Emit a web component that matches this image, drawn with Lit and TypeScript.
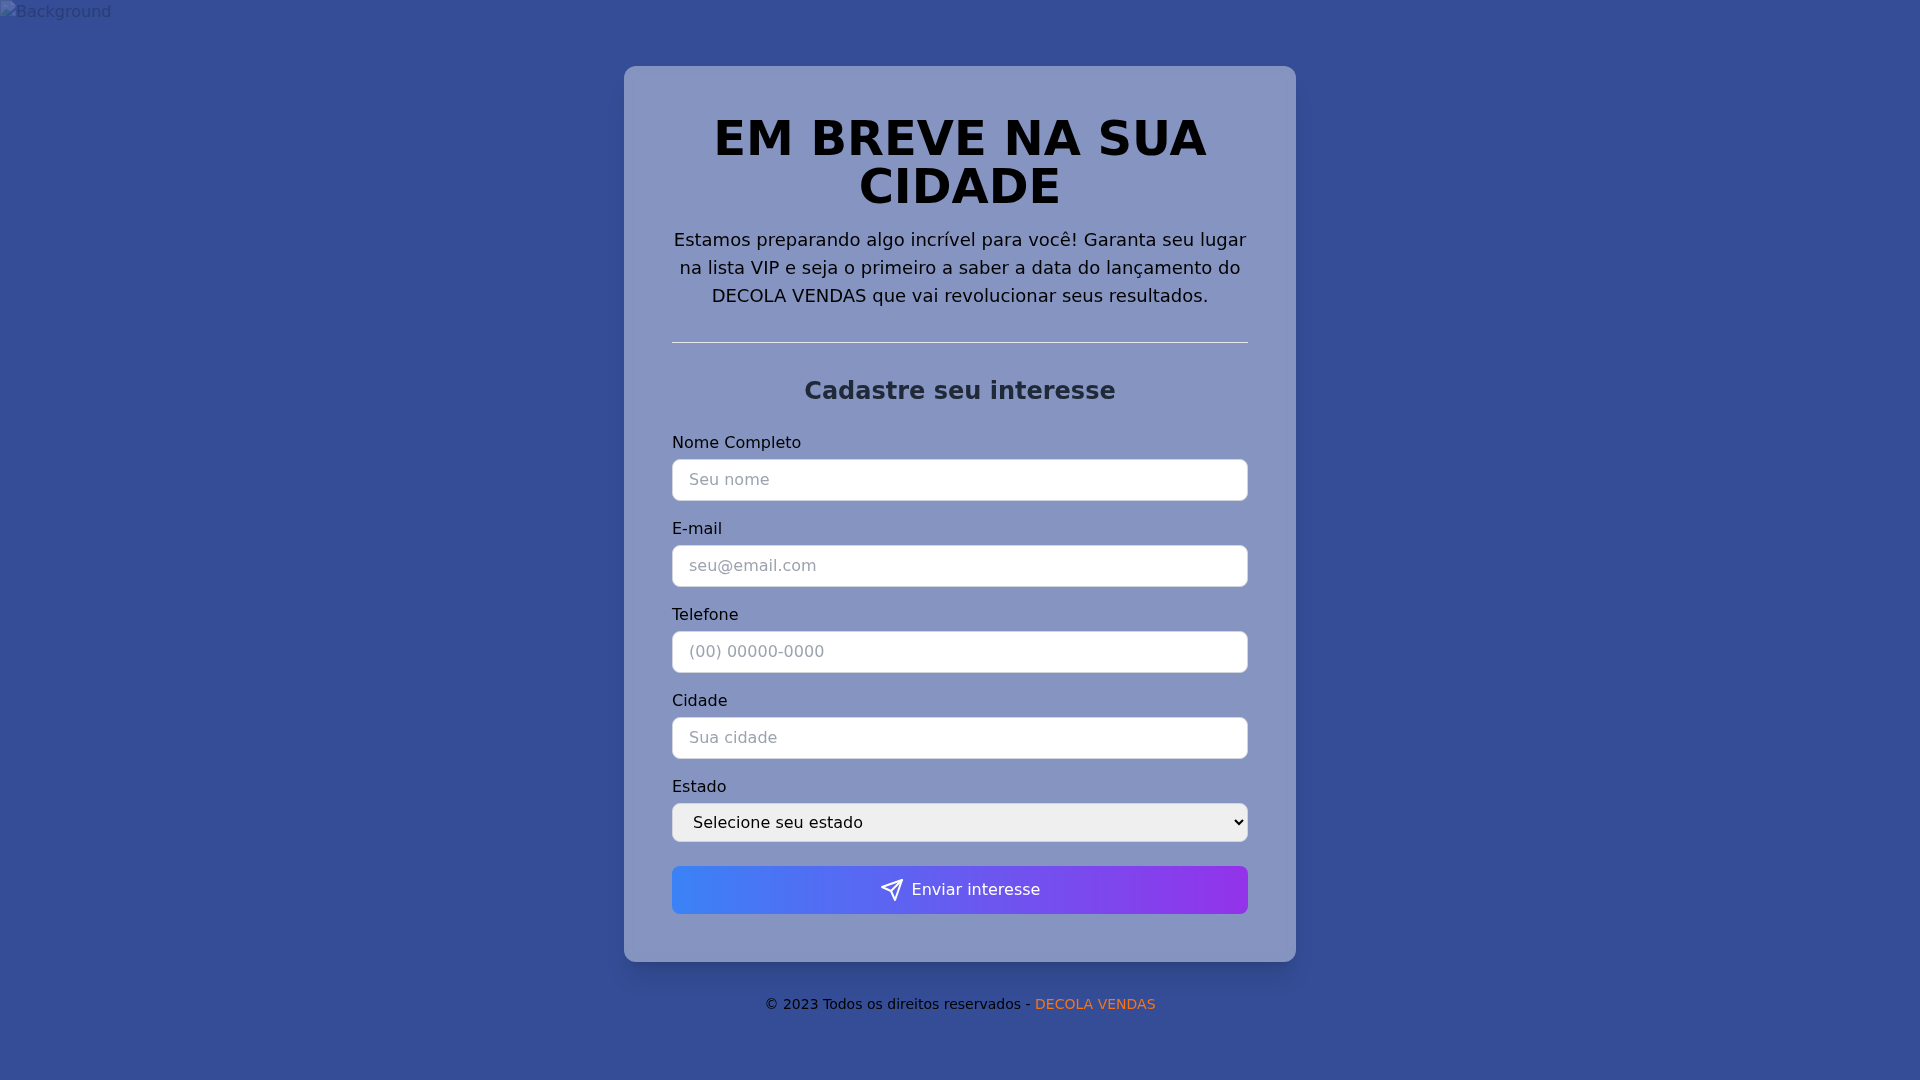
import { LitElement, html, css } from "lit";
import { customElement } from "lit/decorators.js";

interface Field {
  id: string;
  label: string;
  type: string;
  placeholder: string;
}

const FIELDS: Field[] = [
  { id: "nome", label: "Nome Completo", type: "text", placeholder: "Seu nome" },
  { id: "email", label: "E-mail", type: "email", placeholder: "seu@email.com" },
  { id: "telefone", label: "Telefone", type: "tel", placeholder: "(00) 00000-0000" },
  { id: "cidade", label: "Cidade", type: "text", placeholder: "Sua cidade" },
];

@customElement("app-root")
export class AppRoot extends LitElement {
  static styles = css`
    :host {
      display: block;
      font-family: "DejaVu Sans", sans-serif;
      font-size: 16px;
      line-height: 24px;
      color: #000;
    }
    *,
    *::before,
    *::after {
      box-sizing: border-box;
    }
    h1,
    h2,
    p {
      margin: 0;
    }
    .page {
      position: relative;
      min-height: 100vh;
      display: flex;
      flex-direction: column;
      align-items: center;
      justify-content: center;
      gap: 32px;
      background: #344d96;
    }
    .backdrop {
      position: absolute;
      top: 0;
      left: 0;
      display: flex;
      opacity: 0.2;
    }
    .card {
      position: relative;
      width: 100%;
      max-width: 672px;
      padding: 48px;
      border-radius: 12px;
      background: rgba(255, 255, 255, 0.4);
      backdrop-filter: blur(4px);
      box-shadow: 0 20px 25px -5px rgba(0, 0, 0, 0.1), 0 8px 10px -6px rgba(0, 0, 0, 0.1);
    }
    .intro {
      display: flex;
      flex-direction: column;
      gap: 16px;
      padding-bottom: 32px;
      margin-bottom: 32px;
      border-bottom: 1px solid #e5e7eb;
      text-align: center;
    }
    .title {
      font-size: 48px;
      line-height: 48px;
      font-weight: 700;
    }
    .lead {
      font-size: 18px;
      line-height: 28px;
    }
    .subtitle {
      margin-bottom: 24px;
      font-size: 24px;
      line-height: 32px;
      font-weight: 700;
      text-align: center;
      color: #1f2937;
    }
    .form {
      display: flex;
      flex-direction: column;
      gap: 16px;
    }
    .field {
      display: flex;
      flex-direction: column;
      gap: 4px;
    }
    .control {
      width: 100%;
      margin: 0;
      padding: 8px 16px;
      border: 1px solid #d1d5db;
      border-radius: 8px;
      font: inherit;
      color: #000;
    }
    .input {
      background: #fff;
    }
    .input::placeholder {
      color: #9ca3af;
      opacity: 1;
    }
    .select {
      background-color: #efefef;
    }
    .submit {
      display: flex;
      align-items: center;
      justify-content: center;
      gap: 8px;
      width: 100%;
      margin: 8px 0 0;
      padding: 12px 24px;
      border: 0;
      border-radius: 8px;
      background: linear-gradient(to right, #3b82f6, #9333ea);
      font: inherit;
      color: #fff;
      cursor: pointer;
    }
    .footer {
      position: relative;
      font-size: 14px;
      line-height: 20px;
      text-align: center;
    }
    .brand {
      color: #f97316;
      text-decoration: none;
    }
  `;

  render() {
    return html`
      <main class="page">
        <div class="backdrop">
          <svg width="16" height="16" viewBox="0 0 16 16" aria-hidden="true">
            <path d="M0 0h11l5 5v11H0z" fill="#9a9a9a" />
            <path d="M1 1h10v4h4v10H1z" fill="#c3d5f5" />
            <path d="M11 1l4 4h-4z" fill="#fff" />
            <path d="M3 6a2 2 0 0 1 3-1 2 2 0 0 1 2 2H3z" fill="#fff" />
            <path d="M1 15v-1l5-5 4 2 3 4z" fill="#4caf50" />
            <path d="M5 16L16 7v3l-7 6z" fill="#344d96" />
          </svg>
          <span>Background</span>
        </div>
        <section class="card">
          <header class="intro">
            <h1 class="title">EM BREVE NA SUA CIDADE</h1>
            <p class="lead">
              Estamos preparando algo incrível para você! Garanta seu lugar na lista VIP e seja o primeiro a saber a
              data do lançamento do DECOLA VENDAS que vai revolucionar seus resultados.
            </p>
          </header>
          <h2 class="subtitle">Cadastre seu interesse</h2>
          <form class="form" @submit=${(e: Event) => e.preventDefault()}>
            ${FIELDS.map(
              (f) => html`
                <div class="field">
                  <label for=${f.id}>${f.label}</label>
                  <input class="control input" id=${f.id} name=${f.id} type=${f.type} placeholder=${f.placeholder} />
                </div>
              `
            )}
            <div class="field">
              <label for="estado">Estado</label>
              <select class="control select" id="estado" name="estado">
                <option value="">Selecione seu estado</option>
              </select>
            </div>
            <button class="submit" type="submit">
              <svg
                width="24"
                height="24"
                viewBox="0 0 24 24"
                fill="none"
                stroke="currentColor"
                stroke-width="2"
                stroke-linecap="round"
                stroke-linejoin="round"
                aria-hidden="true"
              >
                <path d="m22 2-7 20-4-9-9-4Z" />
                <path d="M22 2 11 13" />
              </svg>
              Enviar interesse
            </button>
          </form>
        </section>
        <footer class="footer">
          © 2023 Todos os direitos reservados - <a class="brand" href="#">DECOLA VENDAS</a>
        </footer>
      </main>
    `;
  }
}
